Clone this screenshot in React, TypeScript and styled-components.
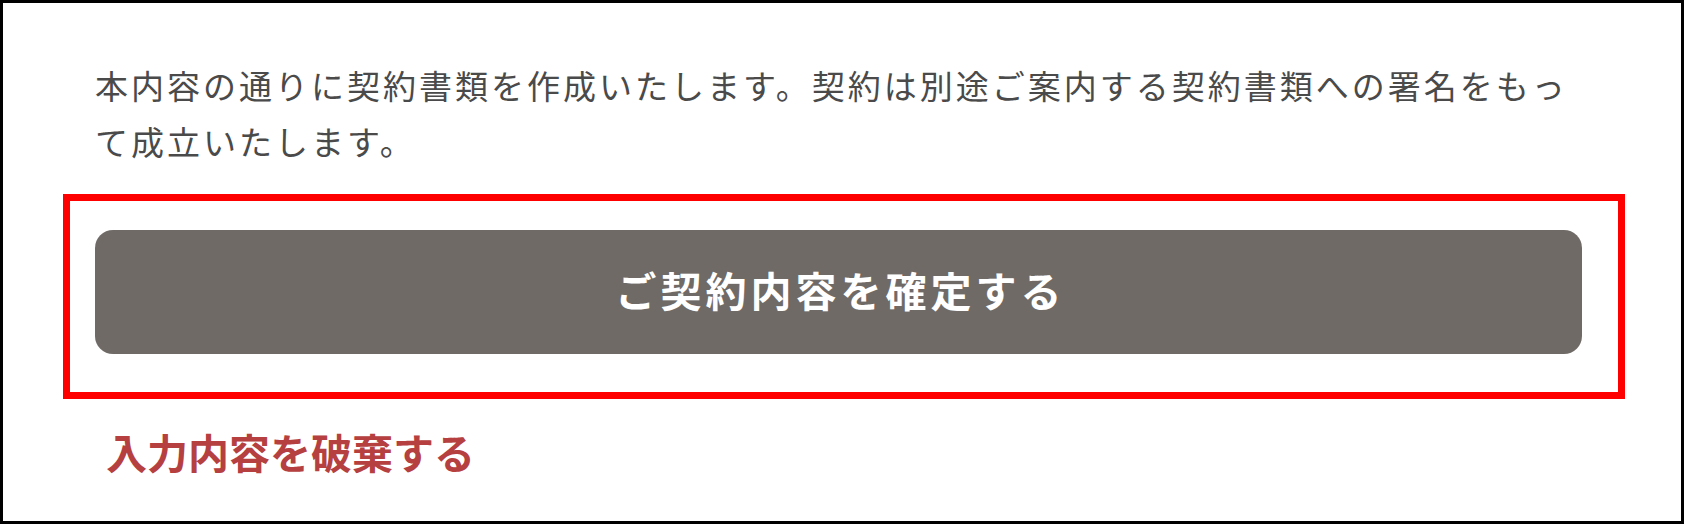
import styled, { createGlobalStyle } from 'styled-components'

const GlobalStyle = createGlobalStyle`
  html, body {
    margin: 0;
    padding: 0;
    background: #ffffff;
  }
  body {
    font-family: 'Noto Sans CJK JP', 'Noto Sans', sans-serif;
  }
`

// ─── Frame ─────────────────────────────────────────────────────────────────────
const Frame = styled.div`
  box-sizing: border-box;
  width: 1684px;
  height: 524px;
  border: 3px solid #000000;
  background: #ffffff;
  padding: 54px 0 0 60px;
  display: flex;
  flex-direction: column;
  align-items: flex-start;
`

const Notice = styled.p`
  margin: 0 0 0 32px;
  width: 1487px;
  font-size: 33px;
  line-height: 56px;
  letter-spacing: 3px;
  color: #4a4a4a;
  font-weight: 400;
`

// the red annotation rectangle around the confirm button
const Highlight = styled.div`
  box-sizing: border-box;
  margin-top: 25px;
  width: 1562px;
  border: 7px solid #ff0000;
  padding: 29px 36px 38px 25px;
`

const ConfirmButton = styled.button`
  display: flex;
  align-items: center;
  justify-content: center;
  width: 100%;
  height: 124px;
  border: none;
  border-radius: 18px;
  background: #6f6a66;
  color: #ffffff;
  font-family: 'Noto Sans CJK JP', 'Noto Sans', sans-serif;
  font-size: 41px;
  font-weight: 700;
  letter-spacing: 4px;
  padding: 0 0 6px 4px;
  cursor: pointer;
`

const DiscardLink = styled.a`
  margin: 24px 0 0 43px;
  font-size: 41px;
  line-height: 56px;
  font-weight: 700;
  color: #b5403f;
  text-decoration: none;
  cursor: pointer;
`

export default function App() {
  return (
    <>
      <GlobalStyle />
      <Frame>
        <Notice>
          本内容の通りに契約書類を作成いたします。契約は別途ご案内する契約書類への署名をもって成立いたします。
        </Notice>
        <Highlight>
          <ConfirmButton type="button">ご契約内容を確定する</ConfirmButton>
        </Highlight>
        <DiscardLink>入力内容を破棄する</DiscardLink>
      </Frame>
    </>
  )
}
